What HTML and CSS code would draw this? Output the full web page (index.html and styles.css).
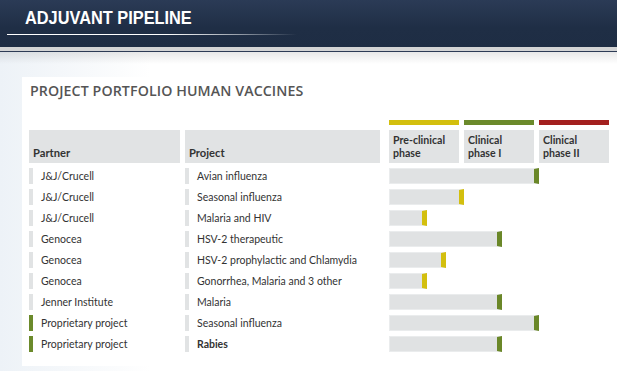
FILE: index.html
```html
<!DOCTYPE html>
<html>
<head>
<meta charset="utf-8">
<link rel="stylesheet" href="styles.css">
</head>
<body>
<header class="topbar">
  <h1 class="topbar-title">ADJUVANT PIPELINE</h1>
  <div class="topbar-rule"></div>
</header>
<div class="topbar-band"></div>
<main class="page">
  <section class="card">
    <h2 class="card-title">PROJECT PORTFOLIO HUMAN VACCINES</h2>
    <div class="phase-strips">
      <span class="strip strip-pre"></span>
      <span class="strip strip-p1"></span>
      <span class="strip strip-p2"></span>
    </div>
    <div class="row head">
      <div class="hcell partner main-head">Partner</div>
      <div class="hcell project main-head">Project</div>
      <div class="phases">
        <div class="hcell">Pre-clinical<br>phase</div>
        <div class="hcell">Clinical<br>phase I</div>
        <div class="hcell">Clinical<br>phase II</div>
      </div>
    </div>

    <div class="row">
      <div class="cell partner"><span class="mark"></span>J&amp;J/Crucell</div>
      <div class="cell project"><span class="mark"></span>Avian influenza</div>
      <div class="phases"><div class="bar green" style="width:150px"></div></div>
    </div>
    <div class="row">
      <div class="cell partner"><span class="mark"></span>J&amp;J/Crucell</div>
      <div class="cell project"><span class="mark"></span>Seasonal influenza</div>
      <div class="phases"><div class="bar yellow" style="width:75px"></div></div>
    </div>
    <div class="row">
      <div class="cell partner"><span class="mark"></span>J&amp;J/Crucell</div>
      <div class="cell project"><span class="mark"></span>Malaria and HIV</div>
      <div class="phases"><div class="bar yellow" style="width:38px"></div></div>
    </div>
    <div class="row">
      <div class="cell partner"><span class="mark"></span>Genocea</div>
      <div class="cell project"><span class="mark"></span>HSV-2 therapeutic</div>
      <div class="phases"><div class="bar green" style="width:113px"></div></div>
    </div>
    <div class="row">
      <div class="cell partner"><span class="mark"></span>Genocea</div>
      <div class="cell project"><span class="mark"></span>HSV-2 prophylactic and Chlamydia</div>
      <div class="phases"><div class="bar yellow" style="width:57px"></div></div>
    </div>
    <div class="row">
      <div class="cell partner"><span class="mark"></span>Genocea</div>
      <div class="cell project"><span class="mark"></span>Gonorrhea, Malaria and 3 other</div>
      <div class="phases"><div class="bar yellow" style="width:38px"></div></div>
    </div>
    <div class="row">
      <div class="cell partner"><span class="mark"></span>Jenner Institute</div>
      <div class="cell project"><span class="mark"></span>Malaria</div>
      <div class="phases"><div class="bar green" style="width:113px"></div></div>
    </div>
    <div class="row">
      <div class="cell partner"><span class="mark mark-green"></span>Proprietary project</div>
      <div class="cell project"><span class="mark"></span>Seasonal influenza</div>
      <div class="phases"><div class="bar green" style="width:150px"></div></div>
    </div>
    <div class="row">
      <div class="cell partner"><span class="mark mark-green"></span>Proprietary project</div>
      <div class="cell project"><span class="mark"></span><b>Rabies</b></div>
      <div class="phases"><div class="bar green" style="width:113px"></div></div>
    </div>
  </section>
</main>
</body>
</html>
```
FILE: styles.css
```css
* { box-sizing: border-box; }
html, body { margin: 0; padding: 0; }
body {
  width: 617px;
  height: 371px;
  overflow: hidden;
  background: #fff;
  font-family: Lato, "Open Sans", sans-serif;
}
.topbar {
  height: 47px;
  background: linear-gradient(#2b3b56, #1f2e45 60%, #1e2d44);
  padding: 8px 0 0 7px;
}
.topbar-title {
  margin: 0 0 0 18px;
  font-family: "Liberation Sans", Arial, sans-serif;
  font-weight: bold;
  font-size: 19px;
  line-height: 20px;
  color: #fff;
  transform: scaleX(0.86);
  transform-origin: left top;
  white-space: nowrap;
}
.topbar-rule {
  margin-top: 6px;
  width: 290px;
  height: 1px;
  background: linear-gradient(90deg, #fff 0%, #fff 55%, rgba(200,205,212,0.7) 80%, rgba(30,45,68,0) 100%);
}
.topbar-band {
  height: 5px;
  background: #d3d4d5;
  border-bottom: 1px solid #2d3b55;
}
.page {
  height: 319px;
  padding: 25px 0 0 22px;
  background:
    linear-gradient(180deg, rgba(0,0,0,0.09), rgba(255,255,255,0) 12px),
    linear-gradient(90deg, #edf2f7 0%, #f4f7fa 60px, #fbfcfd 120px, #fff 150px);
}
.card {
  background: #fff;
  height: 289px;
  padding: 5px 0 0 7px;
  color: #3a3a3a;
}
.card-title {
  margin: 0 0 0 1px;
  font-family: "Open Sans", sans-serif;
  font-weight: 600;
  font-size: 14.2px;
  line-height: 18px;
  color: #555;
  letter-spacing: 0.1px;
  white-space: nowrap;
}
.phase-strips {
  margin: 20px 0 0 360px;
  display: flex;
  gap: 5px;
  height: 5px;
}
.strip { width: 70px; height: 5px; }
.strip-pre { background: #d3bf0e; }
.strip-p1 { background: #6b8a2b; }
.strip-p2 { background: #a3201f; }
.row {
  display: flex;
  height: 16px;
  margin-top: 5px;
  font-size: 10.5px;
  line-height: 16px;
}
.row.head {
  height: 33px;
  margin-top: 5px;
}
.partner { width: 151px; margin-right: 5px; }
.project { width: 195px; margin-right: 9px; }
.phases {
  display: flex;
  gap: 5px;
  width: 220px;
}
.hcell {
  background: #e1e3e4;
  font-weight: bold;
  color: #333;
  font-size: 10.6px;
  line-height: 13px;
  display: flex;
  align-items: flex-end;
  padding: 0 0 4px 4px;
}
.hcell.main-head { font-size: 11.2px; }
.phases .hcell { width: 70px; padding-bottom: 3px; }
.cell {
  display: flex;
  align-items: center;
  color: #333;
  white-space: nowrap;
}
.mark {
  width: 4px;
  height: 16px;
  background: #e1e3e4;
  margin-right: 8px;
  flex: none;
}
.mark-green { background: #6b8a2b; }
.cell b { font-weight: bold; }
.bar {
  height: 16px;
  background: #e0e2e3;
  border: 1px solid #eaeced;
  border-right: 5px solid;
}
.bar.green { border-right-color: #6a8728; }
.bar.yellow { border-right-color: #d3bf0e; }
```
